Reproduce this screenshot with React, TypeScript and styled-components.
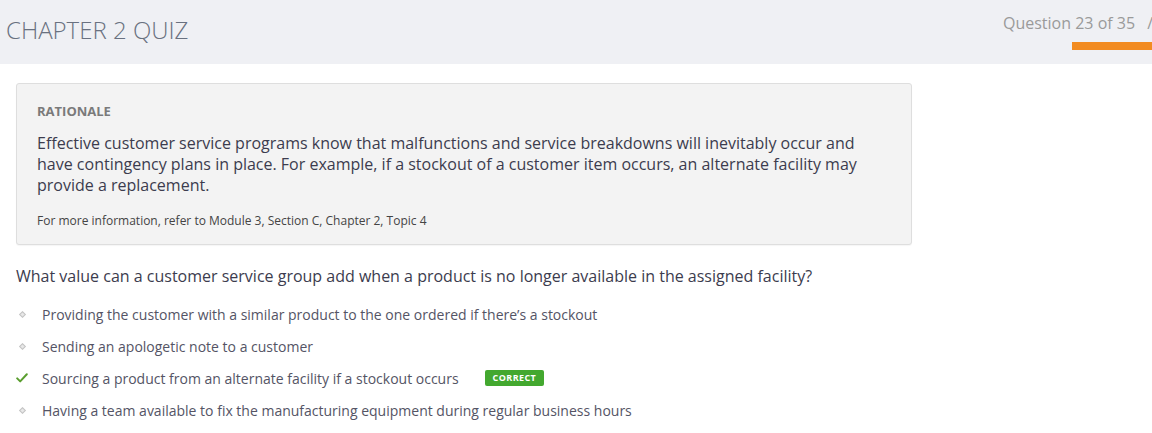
import React from "react";
import styled, { createGlobalStyle } from "styled-components";

const Global = createGlobalStyle`
  html, body { margin: 0; padding: 0; background: #fff; }
  body { font-family: "Open Sans", "Liberation Sans", sans-serif; }
  * { box-sizing: border-box; }
`;

const Page = styled.div`
  width: 1152px;
  overflow: hidden;
`;

const Header = styled.header`
  height: 64px;
  background: #eff0f4;
  display: flex;
  justify-content: space-between;
  align-items: flex-start;
  overflow: hidden;
`;

const Title = styled.h1`
  margin: 14px 0 0 6px;
  font-size: 24px;
  font-weight: 300;
  color: #697180;
  letter-spacing: 0;
  line-height: 32px;
`;

const Progress = styled.div`
  display: flex;
  flex-direction: column;
  align-items: flex-end;
  margin-top: 12px;
  width: 160px;
  margin-right: -1px;
`;

const ProgressLabel = styled.div`
  font-size: 16px;
  color: #9a9a9a;
  line-height: 22px;
  white-space: nowrap;
  display: flex;
  gap: 12px;
`;

const Clip = styled.span`
  color: #9a9a9a;
`;

const Bar = styled.div`
  width: 100px;
  height: 8px;
  margin-top: 8px;
  background: #f28b20;
  align-self: flex-start;
  margin-left: 79px;
`;

const Content = styled.main`
  padding: 19px 16px 0 16px;
`;

const Rationale = styled.section`
  width: 896px;
  background: #f3f3f3;
  border: 1px solid #dedede;
  border-radius: 3px;
  box-shadow: 0 1px 1px rgba(0,0,0,0.04);
  padding: 18px 20px 15px 20px;
`;

const Label = styled.div`
  font-size: 13px;
  font-weight: 700;
  color: #7a7a7a;
  line-height: 18px;
  margin-bottom: 13px;
`;

const Body = styled.p`
  margin: 0;
  font-size: 16px;
  line-height: 21px;
  color: #3c3c4e;
  max-width: 830px;
`;

const Note = styled.p`
  margin: 16px 0 0 0;
  font-size: 12px;
  line-height: 17px;
  color: #444;
`;

const Question = styled.h2`
  margin: 20px 0 0 0;
  font-size: 16px;
  font-weight: 400;
  line-height: 22px;
  color: #3c3c4e;
`;

const Options = styled.ul`
  list-style: none;
  margin: 11px 0 0 0;
  padding: 0;
`;

const Option = styled.li`
  display: flex;
  align-items: center;
  height: 32px;
  font-size: 14px;
  color: #545465;
`;

const Marker = styled.span`
  width: 26px;
  display: flex;
  justify-content: flex-start;
  align-items: center;
`;

const Diamond = styled.span`
  width: 5px;
  height: 5px;
  margin-left: 4px;
  transform: rotate(45deg);
  border: 1px solid #c4c4c4;
  background: #e8e8e8;
`;

const CheckWrap = styled.span`
  display: flex;
`;

const Badge = styled.span`
  margin-left: 26px;
  background: #43a82f;
  color: #fff;
  font-size: 9px;
  font-weight: 700;
  letter-spacing: 0.4px;
  padding: 0 8px;
  height: 16px;
  line-height: 16px;
  border-radius: 2px;
`;

const Check = () => (
  <CheckWrap>
    <svg width="12" height="10" viewBox="0 0 12 10">
      <path d="M1.2 5.4 L4.2 8.4 L10.8 1.2" fill="none" stroke="#5a9e2f" strokeWidth="2" strokeLinecap="round" strokeLinejoin="round" />
    </svg>
  </CheckWrap>
);

const options = [
  { text: "Providing the customer with a similar product to the one ordered if there\u2019s a stockout", correct: false },
  { text: "Sending an apologetic note to a customer", correct: false },
  { text: "Sourcing a product from an alternate facility if a stockout occurs", correct: true },
  { text: "Having a team available to fix the manufacturing equipment during regular business hours", correct: false },
];

export default function App() {
  return (
    <Page>
      <Global />
      <Header>
        <Title>CHAPTER 2 QUIZ</Title>
        <Progress>
          <ProgressLabel>
            <span>Question 23 of 35</span>
            <Clip>/</Clip>
          </ProgressLabel>
          <Bar />
        </Progress>
      </Header>
      <Content>
        <Rationale>
          <Label>RATIONALE</Label>
          <Body>
            Effective customer service programs know that malfunctions and service breakdowns will inevitably occur and have contingency plans in place. For example, if a stockout of a customer item occurs, an alternate facility may provide a replacement.
          </Body>
          <Note>For more information, refer to Module 3, Section C, Chapter 2, Topic 4</Note>
        </Rationale>
        <Question>What value can a customer service group add when a product is no longer available in the assigned facility?</Question>
        <Options>
          {options.map((o) => (
            <Option key={o.text}>
              <Marker>{o.correct ? <Check /> : <Diamond />}</Marker>
              <span>{o.text}</span>
              {o.correct && <Badge>CORRECT</Badge>}
            </Option>
          ))}
        </Options>
      </Content>
    </Page>
  );
}
